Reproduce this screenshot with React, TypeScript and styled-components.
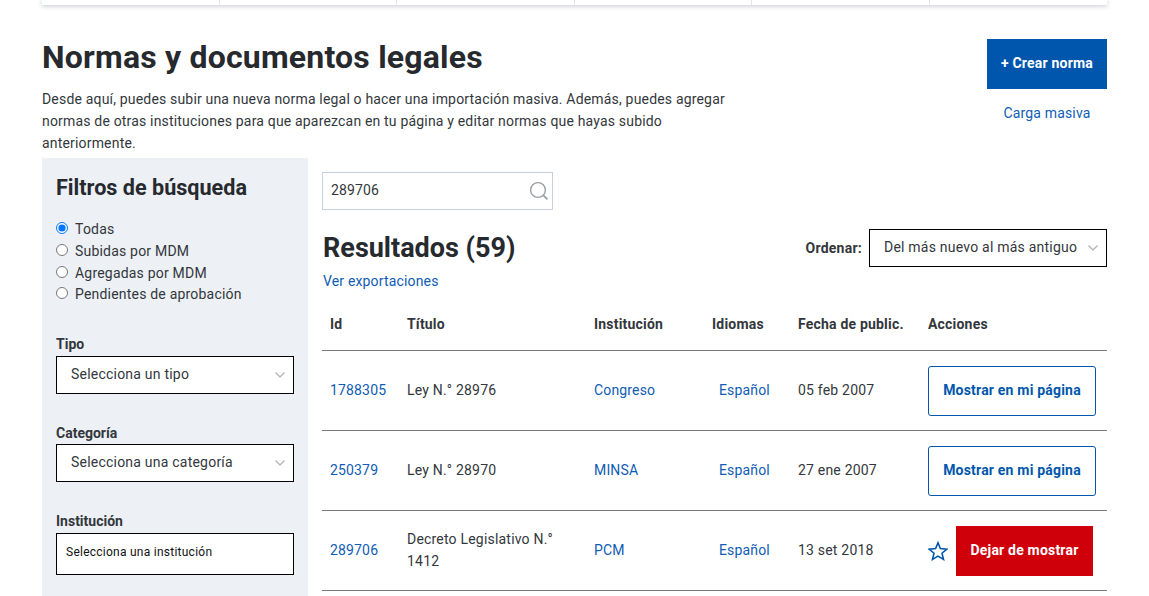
import React from 'react';
import styled, { createGlobalStyle } from 'styled-components';

const GlobalStyle = createGlobalStyle`
  html, body {
    margin: 0;
    padding: 0;
    background: #fff;
    overflow: hidden;
  }
  body {
    font-family: Roboto, "Liberation Sans", sans-serif;
    font-size: 14px;
    color: #33373c;
  }
  * {
    box-sizing: border-box;
  }
`;

const Page = styled.div`
  width: 1149px;
  height: 596px;
  padding: 0 42px;
  overflow: hidden;
`;

const TopStrip = styled.div`
  display: grid;
  grid-template-columns: repeat(6, 1fr);
  height: 5px;
  background: #fff;
  box-shadow: 0 1px 5px rgba(40, 50, 70, 0.28);
`;

const TopCell = styled.div`
  border-right: 1px solid #e3e5e8;

  &:last-child {
    border-right: 0;
  }
`;

const Header = styled.header`
  display: flex;
  justify-content: space-between;
  align-items: flex-start;
  padding-top: 34px;
`;

const Intro = styled.div`
  width: 700px;
`;

const Title = styled.h1`
  margin: 0;
  font-size: 32px;
  line-height: 36px;
  font-weight: 700;
  letter-spacing: 0.2px;
  color: #26292e;
`;

const Lead = styled.p`
  margin: 13px 0 0;
  font-size: 14px;
  line-height: 22px;
  letter-spacing: 0.18px;
`;

const HeaderActions = styled.div`
  display: flex;
  flex-direction: column;
  align-items: center;
  width: 120px;
`;

const PrimaryButton = styled.button`
  width: 120px;
  height: 50px;
  padding: 0 0 2px;
  border: 0;
  background: #0056ac;
  color: #fff;
  font: 700 14px Roboto, sans-serif;
  letter-spacing: 0.2px;
`;

const Link = styled.a`
  color: #0f5cb5;
  font-size: 14px;
  line-height: 22px;
  letter-spacing: 0.16px;
  text-decoration: none;
`;

const BulkLink = styled(Link)`
  margin-top: 13px;
`;

const Layout = styled.div`
  display: grid;
  grid-template-columns: 266px 1fr;
  column-gap: 14px;
  margin-top: 4px;
`;

const Sidebar = styled.aside`
  height: 460px;
  padding: 16px 14px;
  background: #edf0f5;
`;

const SidebarTitle = styled.h2`
  margin: 0;
  font-size: 21.6px;
  line-height: 28px;
  font-weight: 700;
  color: #26292e;
`;

const RadioGroup = styled.div`
  display: flex;
  flex-direction: column;
  margin-top: 16.5px;
`;

const RadioRow = styled.label`
  display: flex;
  align-items: center;
  height: 21.67px;
  gap: 7px;
  font-size: 14px;
  letter-spacing: 0.2px;
`;

const RadioInput = styled.input`
  width: 12px;
  height: 12px;
  margin: 0;
  position: relative;
  top: -1px;
`;

const Field = styled.div<{ $top: number }>`
  margin-top: ${(p) => p.$top}px;
`;

const FieldLabel = styled.div`
  font-size: 14px;
  line-height: 18px;
  font-weight: 700;
  margin-bottom: 3px;
`;

const CategoryLabel = styled(FieldLabel)`
  margin-bottom: 2px;
`;

const SelectBox = styled.div<{ $width?: number }>`
  display: flex;
  align-items: center;
  justify-content: space-between;
  width: ${(p) => (p.$width ? `${p.$width}px` : '100%')};
  height: 38px;
  padding: 0 7px 2px 14px;
  background: #fff;
  border: 1px solid #000;
  font-size: 14px;
  letter-spacing: 0.22px;
`;

const PlainSelect = styled.div`
  display: flex;
  align-items: center;
  height: 42px;
  padding: 0 0 3px 9px;
  background: #fff;
  border: 1px solid #000;
  font-size: 12px;
  letter-spacing: 0.25px;
  color: #111;
`;

const ChevronSvg = styled.svg`
  position: relative;
  top: 1px;
`;

const Chevron = () => (
  <ChevronSvg width="12" height="8" viewBox="0 0 12 8" fill="none">
    <path d="M1.5 1.5 6 6l4.5-4.5" stroke="#b4b8bc" strokeWidth="1.5" />
  </ChevronSvg>
);

const Main = styled.main`
  padding-top: 14px;
`;

const SearchBox = styled.div`
  display: flex;
  align-items: center;
  justify-content: space-between;
  width: 231px;
  height: 38px;
  padding: 0 3px 0 8px;
  border: 1px solid #c5d1df;
  font-size: 14px;
  letter-spacing: 0.15px;
`;

const SearchValue = styled.span`
  position: relative;
  top: -1px;
`;

const ResultsBar = styled.div`
  display: flex;
  justify-content: space-between;
  align-items: center;
  margin-top: 19px;
`;

const ResultsTitle = styled.h2`
  margin: 0 0 0 1px;
  font-size: 27px;
  line-height: 38px;
  font-weight: 700;
  color: #26292e;
`;

const SortGroup = styled.div`
  display: flex;
  align-items: center;
  gap: 7px;
`;

const SortLabel = styled.span`
  font-size: 14px;
  font-weight: 700;
  letter-spacing: 0.25px;
`;

const Exports = styled.div`
  margin-top: 3px;
  padding-left: 1px;
  line-height: 22px;
`;

const Row = styled.div`
  display: grid;
  grid-template-columns: 77px 187px 118px 86px 130px 187px;
  align-items: center;
  border-bottom: 1px solid #777b80;
  height: 80px;
  font-size: 14px;
  line-height: 22px;
  letter-spacing: 0.2px;
`;

const HeadRow = styled(Row)`
  height: 59px;
  padding-top: 5px;
  font-weight: 700;
`;

const Cell = styled.div<{ $indent?: number }>`
  padding: 0 8px 2px ${(p) => p.$indent ?? 8}px;
`;

const ActionCell = styled.div`
  padding: 0 8px;
`;

const OutlineButton = styled.button`
  width: 168px;
  height: 50px;
  padding: 0 0 2px;
  border: 1px solid #0056ac;
  border-radius: 3px;
  background: #fff;
  color: #0056ac;
  font: 700 14px Roboto, sans-serif;
  letter-spacing: 0.2px;
`;

const ActiveActions = styled.div`
  display: flex;
  align-items: center;
  gap: 8px;
`;

const DangerButton = styled.button`
  width: 137px;
  height: 50px;
  padding: 0 0 2px;
  border: 0;
  background: #d0000b;
  color: #fff;
  font: 700 14px Roboto, sans-serif;
  letter-spacing: 0.2px;
`;

const SearchIcon = () => (
  <svg width="20" height="20" viewBox="0 0 20 20" fill="none" stroke="#9a9fa4">
    <circle cx="9" cy="9" r="7.4" strokeWidth="1.4" />
    <path d="m14.4 14.4 4 4" strokeWidth="1.8" />
  </svg>
);

const StarIcon = () => (
  <svg width="20" height="20" viewBox="0 0 20 20" fill="none" stroke="#0056ac" strokeWidth="1.6">
    <path d="M10 1.8 12.4 7.6 18.9 8.1 14 12.2 15.5 18.4 10 15.1 4.5 18.4 6 12.2 1.1 8.1 7.6 7.6Z" />
  </svg>
);

const filters = ['Todas', 'Subidas por MDM', 'Agregadas por MDM', 'Pendientes de aprobación'];

const rows = [
  { id: '1788305', title: 'Ley N.° 28976', inst: 'Congreso', date: '05 feb 2007', active: false },
  { id: '250379', title: 'Ley N.° 28970', inst: 'MINSA', date: '27 ene 2007', active: false },
  { id: '289706', title: 'Decreto Legislativo N.° 1412', inst: 'PCM', date: '13 set 2018', active: true },
];

const App: React.FC = () => {
  return (
    <Page>
      <GlobalStyle />
      <TopStrip>
        {[0, 1, 2, 3, 4, 5].map((i) => (
          <TopCell key={i} />
        ))}
      </TopStrip>
      <Header>
        <Intro>
          <Title>Normas y documentos legales</Title>
          <Lead>
            Desde aquí, puedes subir una nueva norma legal o hacer una importación masiva. Además, puedes agregar
            normas de otras instituciones para que aparezcan en tu página y editar normas que hayas subido
            anteriormente.
          </Lead>
        </Intro>
        <HeaderActions>
          <PrimaryButton>+ Crear norma</PrimaryButton>
          <BulkLink href="#">Carga masiva</BulkLink>
        </HeaderActions>
      </Header>
      <Layout>
        <Sidebar>
          <SidebarTitle>Filtros de búsqueda</SidebarTitle>
          <RadioGroup>
            {filters.map((f, i) => (
              <RadioRow key={f}>
                <RadioInput type="radio" name="filtro" defaultChecked={i === 0} />
                {f}
              </RadioRow>
            ))}
          </RadioGroup>
          <Field $top={29.5}>
            <FieldLabel>Tipo</FieldLabel>
            <SelectBox>
              Selecciona un tipo
              <Chevron />
            </SelectBox>
          </Field>
          <Field $top={30}>
            <CategoryLabel>Categoría</CategoryLabel>
            <SelectBox>
              Selecciona una categoría
              <Chevron />
            </SelectBox>
          </Field>
          <Field $top={30}>
            <FieldLabel>Institución</FieldLabel>
            <PlainSelect>Selecciona una institución</PlainSelect>
          </Field>
        </Sidebar>
        <Main>
          <SearchBox>
            <SearchValue>289706</SearchValue>
            <SearchIcon />
          </SearchBox>
          <ResultsBar>
            <ResultsTitle>Resultados (59)</ResultsTitle>
            <SortGroup>
              <SortLabel>Ordenar:</SortLabel>
              <SelectBox $width={238}>
                Del más nuevo al más antiguo
                <Chevron />
              </SelectBox>
            </SortGroup>
          </ResultsBar>
          <Exports>
            <Link href="#">Ver exportaciones</Link>
          </Exports>
          <HeadRow>
            <ActionCell>Id</ActionCell>
            <ActionCell>Título</ActionCell>
            <ActionCell>Institución</ActionCell>
            <ActionCell>Idiomas</ActionCell>
            <ActionCell>Fecha de public.</ActionCell>
            <ActionCell>Acciones</ActionCell>
          </HeadRow>
          {rows.map((r) => (
            <Row key={r.id}>
              <Cell>
                <Link href="#">{r.id}</Link>
              </Cell>
              <Cell>{r.title}</Cell>
              <Cell>
                <Link href="#">{r.inst}</Link>
              </Cell>
              <Cell $indent={15}>
                <Link href="#">Español</Link>
              </Cell>
              <Cell>{r.date}</Cell>
              <ActionCell>
                {r.active ? (
                  <ActiveActions>
                    <StarIcon />
                    <DangerButton>Dejar de mostrar</DangerButton>
                  </ActiveActions>
                ) : (
                  <OutlineButton>Mostrar en mi página</OutlineButton>
                )}
              </ActionCell>
            </Row>
          ))}
        </Main>
      </Layout>
    </Page>
  );
};

export default App;
